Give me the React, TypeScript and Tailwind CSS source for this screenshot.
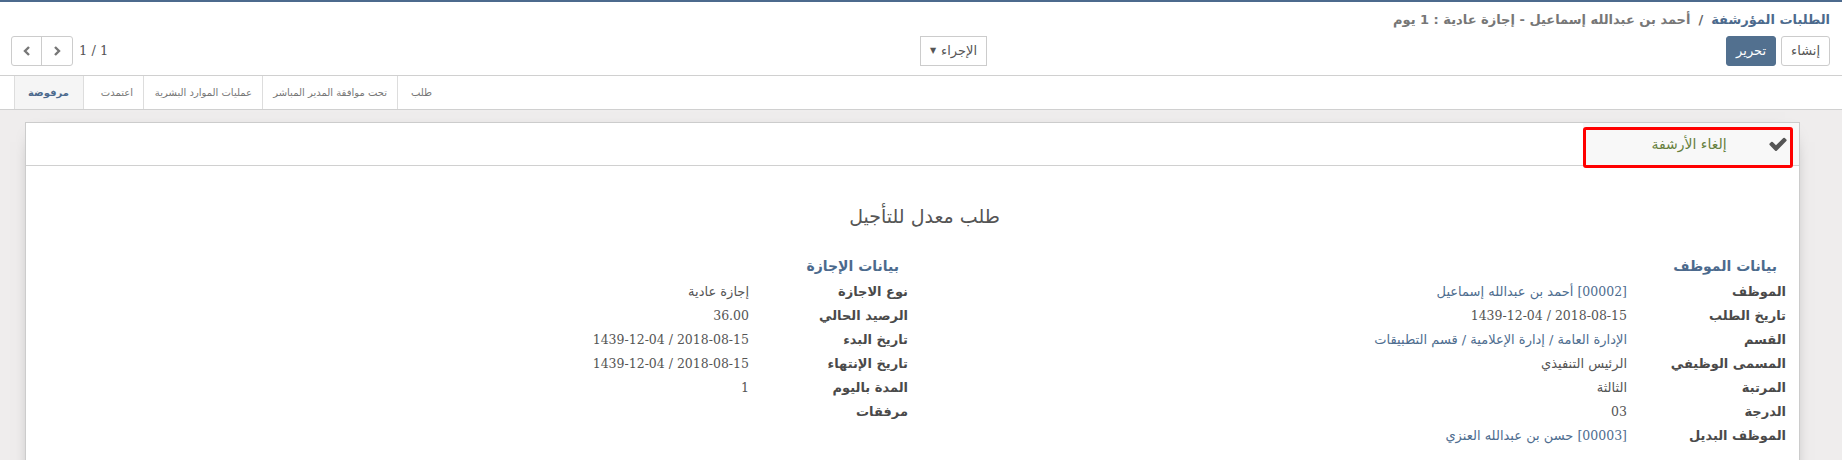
import React from "react";

type Row = { label: string; value: React.ReactNode; link?: boolean };

const Num = ({ children }: { children: React.ReactNode }) => (
  <span className="font-['DejaVu_Serif',serif] text-[12.5px]">{children}</span>
);

const DATE = (
  <span dir="ltr">
    <Num>1439-12-04 / 2018-08-15</Num>
  </span>
);

const EMPLOYEE: Row[] = [
  { label: "الموظف", value: <><Num>[00002]</Num> أحمد بن عبدالله إسماعيل</>, link: true },
  { label: "تاريخ الطلب", value: DATE },
  { label: "القسم", value: "الإدارة العامة / إدارة الإعلامية / قسم التطبيقات", link: true },
  { label: "المسمى الوظيفي", value: "الرئيس التنفيذي" },
  { label: "المرتبة", value: "الثالثة" },
  { label: "الدرجة", value: <Num>03</Num> },
  { label: "الموظف البديل", value: <><Num>[00003]</Num> حسن بن عبدالله العنزي</>, link: true },
];

const LEAVE: Row[] = [
  { label: "نوع الاجازة", value: "إجازة عادية" },
  { label: "الرصيد الحالي", value: <Num>36.00</Num> },
  { label: "تاريخ البدء", value: DATE },
  { label: "تاريخ الإنتهاء", value: DATE },
  { label: "المدة باليوم", value: <Num>1</Num> },
  { label: "مرفقات", value: "" },
];

const TABS = [
  { name: "مرفوضة", w: "w-[69px]", active: true },
  { name: "اعتمدت", w: "w-[60px]" },
  { name: "عمليات الموارد البشرية", w: "w-[119px]" },
  { name: "تحت موافقة المدير المباشر", w: "w-[135px]" },
  { name: "طلب", w: "w-[45px]" },
];

function Group({ title, rows }: { title: string; rows: Row[] }) {
  return (
    <div className="flex flex-col">
      <h3 className="mb-[3px] pr-[9px] text-[14px] font-bold leading-[22px] text-[#4c6a8d]">{title}</h3>
      {rows.map((r) => (
        <div key={r.label} className="flex h-[24px] items-center">
          <div className="w-[159px] shrink-0 text-[13px] font-bold text-[#4a4a4a]">{r.label}</div>
          <div className={`text-[13px] ${r.link ? "text-[#4e6d8f]" : "text-[#555]"}`}>{r.value}</div>
        </div>
      ))}
    </div>
  );
}

export default function App() {
  return (
    <div dir="rtl" className="h-[460px] w-full overflow-hidden bg-white font-['DejaVu_Sans',sans-serif]">
      {/* Control panel */}
      <div className="border-t-2 border-b border-t-[#4c6a8d] border-b-[#d0d0d0] pr-[12px] pl-[11px] pt-[6px] pb-[9px]">
        <div className="flex h-[24px] items-center text-[13px] font-bold">
          <span className="text-[#4c6a8d]">الطلبات المؤرشفة</span>
          <span className="mx-[8px] text-[#666]">/</span>
          <span className="text-[#777]">أحمد بن عبدالله إسماعيل - إجازة عادية : 1 يوم</span>
        </div>
        <div className="mt-[4px] grid grid-cols-[1fr_976px] items-center">
          <div className="flex gap-[5px]">
            <button className="h-[30px] rounded-[3px] border border-[#ccc] bg-white px-[9px] text-[13px] text-[#555]">
              إنشاء
            </button>
            <button className="h-[30px] rounded-[3px] border border-[#52708f] bg-[#52708f] px-[9px] text-[13px] text-white">
              تحرير
            </button>
          </div>
          <div className="flex items-center justify-between">
            <button className="flex h-[30px] items-center gap-[5px] border border-[#ccc] bg-white px-[9px] text-[13px] text-[#555]">
              <span>الإجراء</span>
              <span className="text-[8px] leading-none text-[#555]">▼</span>
            </button>
            <div dir="ltr" className="flex items-center gap-[6px]">
              <div className="flex h-[30px] rounded-[3px] border border-[#ccc]">
                <button className="flex w-[30px] items-center justify-center border-r border-[#ccc]">
                  <svg width="10" height="12" viewBox="0 0 10 12">
                    <path d="M7 2 L3 6 L7 10" fill="none" stroke="#777" strokeWidth="2.4" />
                  </svg>
                </button>
                <button className="flex w-[30px] items-center justify-center">
                  <svg width="10" height="12" viewBox="0 0 10 12">
                    <path d="M3 2 L7 6 L3 10" fill="none" stroke="#777" strokeWidth="2.4" />
                  </svg>
                </button>
              </div>
              <span className="font-['DejaVu_Serif',serif] text-[13px] text-[#555]">1 / 1</span>
            </div>
          </div>
        </div>
      </div>

      {/* Status bar */}
      <div dir="ltr" className="flex h-[34px] border-b border-[#d0d0d0] bg-white pl-[14px]">
        {TABS.map((t) => (
          <div
            key={t.name}
            dir="rtl"
            className={`flex items-center whitespace-nowrap border-l border-[#ddd] pr-[10px] text-[10px] ${t.w} ${
              t.active ? "bg-[#f5f5f5] pr-[14px] font-bold text-[#4c6a8d]" : "text-[#777]"
            }`}
          >
            {t.name}
          </div>
        ))}
      </div>

      {/* Sheet area */}
      <div className="h-full bg-[#efeded] pt-[12px] pr-[42px] pl-[25px]">
        <div className="relative h-[400px] border border-[#ccc] bg-white shadow-[0_5px_20px_-15px_black]">
          <div className="flex h-[43px] border-b border-[#d0d0d0]">
            <button className="flex w-[216px] items-center bg-[#f8f8f8] pr-[11px]">
              <svg width="20" height="20" viewBox="0 0 1792 1792" className="shrink-0">
                <path
                  fill="#555"
                  d="M1671 566q0 40-28 68l-724 724-136 136q-28 28-68 28t-68-28l-136-136-362-362q-28-28-28-68t28-68l136-136q28-28 68-28t68 28l294 295 656-657q28-28 68-28t68 28l136 136q28 28 28 68z"
                />
              </svg>
              <span className="flex-1 pl-[27px] text-center text-[14px] text-[#66803d]">إلغاء الأرشفة</span>
            </button>
          </div>
          <div className="absolute top-[4px] right-[6px] h-[41px] w-[210px] rounded-[3px] border-[3px] border-[#ff0000]" />

          <div className="mt-[38px] pl-[24px] text-center text-[19px] leading-[24px] text-[#555]">طلب معدل للتأجيل</div>

          <div className="mt-[27px] grid grid-cols-[878px_878px] pr-[13px]">
            <Group title="بيانات الموظف" rows={EMPLOYEE} />
            <Group title="بيانات الإجازة" rows={LEAVE} />
          </div>
        </div>
      </div>
    </div>
  );
}
